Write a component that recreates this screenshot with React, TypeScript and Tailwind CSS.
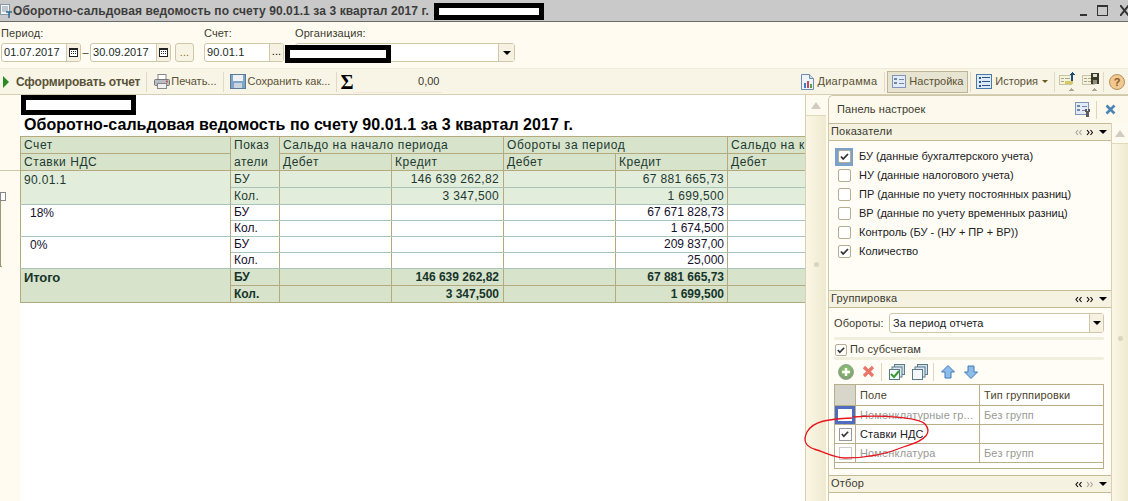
import React from "react";

const font = "font-['Liberation_Sans',Arial,sans-serif]";

function Sep() {
  return <div className="w-px h-[20px] bg-[#e0dac6] shrink-0" />;
}

function CalIcon() {
  return (
    <svg width="9" height="9" viewBox="0 0 9 9" shapeRendering="crispEdges">
      <rect x="0" y="0" width="9" height="9" fill="#222" />
      <rect x="1" y="2" width="7" height="6" fill="#fff" />
      <path d="M2 3h1v1H2zM4 3h1v1H4zM6 3h1v1H6zM2 5h1v1H2zM4 5h1v1H4zM6 5h1v1H6z" fill="#222" />
    </svg>
  );
}

function DateInput({ value, w }: { value: string; w: string }) {
  return (
    <div className={`${w} h-[19px] flex bg-white border border-[#cfc8a8] rounded-[3px] overflow-hidden`}>
      <div className="flex-1 pl-[2px] text-[11px] leading-[17px] text-[#1a2a20] tracking-[0.05px]">{value}</div>
      <div className="w-[14px] flex items-center justify-center bg-[#f6f1e2] border-l border-[#cfc8a8]">
        <CalIcon />
      </div>
    </div>
  );
}

function Tool({ children, className = "" }: { children: React.ReactNode; className?: string }) {
  return <div className={`flex items-center text-[11px] text-[#5a5238] whitespace-nowrap ${className}`}>{children}</div>;
}

function ChartIcon() {
  return (
    <svg width="13" height="16" viewBox="0 0 13 16">
      <path d="M.5 .5h8l4 4v11H.5z" fill="#eef4fa" stroke="#6d8db0" />
      <path d="M8.5 .5v4h4" fill="#cfdcea" stroke="#6d8db0" />
      <rect x="3" y="9" width="2" height="5" fill="#3d7fc0" />
      <rect x="6" y="7" width="2" height="7" fill="#c84a5a" />
      <rect x="9" y="10" width="2" height="4" fill="#5aa04a" />
    </svg>
  );
}

function SetupIcon({ wrench }: { wrench?: boolean }) {
  return (
    <svg width={wrench ? 16 : 14} height={wrench ? 15 : 13} viewBox={wrench ? "0 0 16 15" : "0 0 14 13"} shapeRendering="crispEdges">
      <rect x="0.5" y="0.5" width="13" height="12" fill="#e4ebf6" stroke="#7f95bb" />
      <path d="M2 3h3v2H2zM2 7h3v2H2z" fill="#7088a8" />
      <path d="M7 4h5v1H7zM7 8h5v1H7z" fill="#7088a8" />
      {wrench ? <path d="M10 7h2v2h1V7h2v3h-1v5h-3v-5h-1z" fill="#5c5c5c" /> : null}
    </svg>
  );
}

function HistoryIcon() {
  return (
    <svg width="16" height="15" viewBox="0 0 16 15" shapeRendering="crispEdges">
      <rect x="0.5" y="0.5" width="15" height="14" fill="#dfeaf6" stroke="#4a7ba8" />
      <path d="M3 3h2v2H3zM3 7h2v2H3zM3 11h2v2H3z" fill="#24588c" />
      <path d="M6 3h8v1H6zM6 7h8v1H6zM6 11h8v1H6z" fill="#24588c" />
    </svg>
  );
}

function ListArrow({ disk }: { disk?: boolean }) {
  return (
    <svg width="17" height="20" viewBox="0 0 17 20" shapeRendering="crispEdges">
      <rect x="0.5" y="3.5" width="12" height="9" fill="#f4f2d8" stroke="#c8c4a8" />
      <path d="M2 6h3v1H2zM6 6h5v1H6zM2 9h3v1H2zM6 9h5v1H6z" fill="#a8a890" />
      {disk ? (
        <>
          <rect x="9" y="1" width="8" height="11" fill="#3a3a2a" />
          <rect x="11" y="2" width="4" height="3" fill="#e0e0d0" />
          <rect x="11" y="8" width="4" height="4" fill="#909080" />
        </>
      ) : (
        <>
          <path d="M6 9h8v3H6z" fill="#d8c860" />
          <path d="M13 0l3 3h-2v6h-2V3h-2z" fill="#1f4f78" />
        </>
      )}
      <path d="M9 19l3-3 3 3z" fill="#a8a898" />
    </svg>
  );
}

type Row = { h: string; name?: string; rows?: number; pok: string; k1?: string; k2?: string; tone: "light" | "white" | "total" };

const rows: Row[] = [
  { h: "h-[17px]", name: "90.01.1", rows: 2, pok: "БУ", k1: "146 639 262,82", k2: "67 881 665,73", tone: "light" },
  { h: "h-[17px]", pok: "Кол.", k1: "3 347,500", k2: "1 699,500", tone: "light" },
  { h: "h-[16px]", name: "18%", rows: 2, pok: "БУ", k2: "67 671 828,73", tone: "white" },
  { h: "h-[16px]", pok: "Кол.", k2: "1 674,500", tone: "white" },
  { h: "h-[16px]", name: "0%", rows: 2, pok: "БУ", k2: "209 837,00", tone: "white" },
  { h: "h-[16px]", pok: "Кол.", k2: "25,000", tone: "white" },
  { h: "h-[17px]", name: "Итого", rows: 2, pok: "БУ", k1: "146 639 262,82", k2: "67 881 665,73", tone: "total" },
  { h: "h-[17px]", pok: "Кол.", k1: "3 347,500", k2: "1 699,500", tone: "total" },
];

const th = "border border-[#b5aa7d] bg-[#d8e3cc] pl-[3px] pr-0 text-left font-normal align-top text-[12px] text-[#1c3a30] tracking-[0.55px] overflow-hidden whitespace-nowrap";
const thText = "h-[16px] pt-[1px] leading-[14px]";

function HeadCell({ text, span }: { text: string; span?: number }) {
  return (
    <th className={th} colSpan={span}>
      <div className={thText}>{text}</div>
    </th>
  );
}

function ReportTable() {
  return (
    <table className="table-fixed border-collapse w-[800px]">
      <colgroup>
        <col className="w-[210px]" />
        <col className="w-[49px]" />
        <col className="w-[112px]" />
        <col className="w-[112px]" />
        <col className="w-[112px]" />
        <col className="w-[112px]" />
        <col className="w-[93px]" />
      </colgroup>
      <thead>
        <tr className="h-[17px]">
          <HeadCell text="Счет" />
          <th className={th} rowSpan={2}>
            <div className="h-[33px] leading-[17px] tracking-[0.5px]">Показ<br />атели</div>
          </th>
          <HeadCell text="Сальдо на начало периода" span={2} />
          <HeadCell text="Обороты за период" span={2} />
          <HeadCell text="Сальдо на конец периода" />
        </tr>
        <tr className="h-[17px]">
          <HeadCell text="Ставки НДС" />
          <HeadCell text="Дебет" />
          <HeadCell text="Кредит" />
          <HeadCell text="Дебет" />
          <HeadCell text="Кредит" />
          <HeadCell text="Дебет" />
        </tr>
      </thead>
      <tbody>
        {rows.map((r, i) => {
          const total = r.tone === "total";
          const bg = r.tone === "light" ? "bg-[#e3eddc]" : total ? "bg-[#d8e3cc]" : "bg-white";
          const line = total ? "border-[#b5aa7d]" : "border-[#a8c4b8]";
          const box = r.tone === "white" ? "h-[15px] leading-[14px]" : "h-[16px] pt-[1px] leading-[14px]";
          const cell = `border ${line} border-x-[#b5aa7d] ${bg} pl-[3px] text-[12px] whitespace-nowrap overflow-hidden ${
            total ? "font-bold text-[#16352a]" : r.tone === "light" ? "text-[#1c3a30] tracking-[0.35px]" : "text-[#14102c]"
          }`;
          return (
            <tr key={i} className={r.h}>
              {r.rows ? (
                <td
                  className={`${cell} align-top ${r.tone === "white" ? "pl-[9px] pt-[1px]" : "pt-[2px]"} ${total ? "text-[13px] tracking-[-0.1px]" : ""}`}
                  rowSpan={r.rows}
                >
                  <div className="h-[14px] leading-[14px]">{r.name}</div>
                </td>
              ) : null}
              <td className={cell}><div className={box}>{r.pok}</div></td>
              <td className={cell} />
              <td className={`${cell} text-right pr-[4px]`}><div className={box}>{r.k1}</div></td>
              <td className={cell} />
              <td className={`${cell} text-right pr-[3px]`}><div className={box}>{r.k2}</div></td>
              <td className={cell} />
            </tr>
          );
        })}
      </tbody>
    </table>
  );
}

function Chevrons({ flip, dim }: { flip?: boolean; dim?: boolean }) {
  const d = flip ? "M3 1L1 3.5 3 6M6.5 1l-2 2.5 2 2.5" : "M1 1l2 2.5L1 6M4.5 1l2 2.5-2 2.5";
  return (
    <svg width="7" height="7" viewBox="0 0 7 7">
      <path d={d} fill="none" stroke={dim ? "#a8a8a0" : "#111"} strokeWidth="1.2" />
    </svg>
  );
}

function SectionHead({ title, dim }: { title: string; dim?: "left" | "right" }) {
  return (
    <div className="h-[18px] shrink-0 flex items-center justify-between bg-[#f6f2e2] border-y border-[#c4bb94] pl-[2px] pr-[4px] text-[11px] tracking-[0.2px] text-[#3a3a30]">
      <span className="pb-[2px]">{title}</span>
      <span className="flex items-center gap-[4px]">
        <Chevrons flip dim={dim === "left"} />
        <Chevrons dim={dim === "right"} />
        <span className="ml-[2px] w-0 h-0 border-x-[4px] border-x-transparent border-t-[4px] border-t-black" />
      </span>
    </div>
  );
}

function CheckMark({ size = 11 }: { size?: number }) {
  return (
    <svg width={size} height={size} viewBox="0 0 11 11">
      <path d="M2 5.5l2.2 2.5L9 3" fill="none" stroke="#333" strokeWidth="1.8" />
    </svg>
  );
}

const indicators = [
  { t: "БУ (данные бухгалтерского учета)", on: true, focus: true },
  { t: "НУ (данные налогового учета)" },
  { t: "ПР (данные по учету постоянных разниц)" },
  { t: "ВР (данные по учету временных разниц)" },
  { t: "Контроль (БУ - (НУ + ПР + ВР))" },
  { t: "Количество", on: true },
];

function AddIcon() {
  return (
    <svg width="16" height="16" viewBox="0 0 16 16">
      <defs>
        <radialGradient id="addBall" cx="50%" cy="40%" r="60%">
          <stop offset="0%" stopColor="#8fd070" />
          <stop offset="100%" stopColor="#7a9a70" />
        </radialGradient>
      </defs>
      <circle cx="8" cy="8" r="7.5" fill="url(#addBall)" stroke="#9aa898" />
      <path d="M8 4v8M4 8h8" stroke="#fff" strokeWidth="2.4" />
    </svg>
  );
}

function DeleteIcon() {
  return (
    <svg width="13" height="13" viewBox="0 0 13 13">
      <path d="M2 2l9 9M11 2l-9 9" stroke="#e8776a" strokeWidth="3.2" />
    </svg>
  );
}

function Stack({ check }: { check?: boolean }) {
  return (
    <svg width="16" height="16" viewBox="0 0 16 16">
      <rect x="5.5" y="0.5" width="10" height="10" fill="#cfe0ea" stroke="#5a7a8a" />
      <rect x="3" y="3" width="10" height="10" fill="#dfe8f0" stroke="#5a7a8a" />
      <rect x="0.5" y="5.5" width="10" height="10" fill="#f4f8fa" stroke="#5a7a8a" />
      {check ? <path d="M2 10l3 3 5-6" fill="none" stroke="#3a9a30" strokeWidth="2" /> : null}
    </svg>
  );
}

function Arrow({ down }: { down?: boolean }) {
  return (
    <svg width="14" height="14" viewBox="0 0 14 14">
      <path d={down ? "M4 1h6v6h3.5L7 13.5.5 7H4z" : "M4 13h6V7h3.5L7 .5.5 7H4z"} fill="#8dbce8" stroke="#3c7ab8" />
    </svg>
  );
}

function GroupTable() {
  const rowsG = [
    { f: "Номенклатурные гр...", t: "Без групп", grey: true, focus: true },
    { f: "Ставки НДС", t: "", on: true },
    { f: "Номенклатура", t: "Без групп", grey: true },
  ];
  return (
    <div className="ml-[5px] mt-[2px] w-[270px] h-[85px] border border-[#b9b08a] bg-white flex flex-col text-[11px] tracking-[0.15px]">
      <div className="h-[21px] flex border-b border-[#b9b08a] text-[#4a4428] shrink-0">
        <div className="w-[21px] bg-[#d8d5cb] border-r border-[#b9b08a]" />
        <div className="w-[124px] pl-[4px] border-r border-[#b9b08a] leading-[20px]">Поле</div>
        <div className="flex-1 pl-[4px] leading-[20px]">Тип группировки</div>
      </div>
      {rowsG.map((r) => (
        <div key={r.f} className="h-[19px] flex border-b border-[#b9b08a] shrink-0">
          <div className="w-[21px] border-r border-[#b9b08a] flex items-center justify-center">
            {r.focus ? (
              <div className="w-[20px] h-[18px] shrink-0 bg-white border-[3px] border-[#4f6cc0]" />
            ) : (
              <div className={`w-[13px] h-[13px] flex items-center justify-center border ${r.on ? "border-[#999]" : "border-[#ccc]"}`}>
                {r.on ? <CheckMark size={10} /> : null}
              </div>
            )}
          </div>
          <div className={`w-[124px] pl-[4px] border-r border-[#b9b08a] leading-[18px] whitespace-nowrap overflow-hidden ${r.grey ? "text-[#9a9a94]" : "text-[#20201c]"}`}>{r.f}</div>
          <div className="flex-1 pl-[4px] leading-[18px] text-[#9a9a94]">{r.t}</div>
        </div>
      ))}
    </div>
  );
}

function SettingsPanel() {
  return (
    <div className="w-[300px] h-full ml-[2px] border-l border-t border-[#cfc8a8] rounded-tl-[5px] bg-[#fdf9ec] flex flex-col overflow-hidden">
      <div className="h-[27px] shrink-0 flex items-center pl-[8px] text-[11px] tracking-[0.1px] text-[#3c3c30]">
        <span className="flex-1">Панель настроек</span>
        <SetupIcon wrench />
        <div className="w-px h-[18px] bg-[#ddd6bc] ml-[5px] mr-[8px]" />
        <svg width="11" height="11" viewBox="0 0 11 11" className="mr-[12px]">
          <path d="M1.5 1.5l8 8M9.5 1.5l-8 8" stroke="#4a85b5" strokeWidth="2.6" />
        </svg>
      </div>
      <div className="flex-1 flex min-h-0">
        <div className="w-[282px] flex flex-col">
          <SectionHead title="Показатели" dim="left" />
          <div className="h-[149px] shrink-0 bg-[#fffdf6] pt-[6px] pl-[6px]">
            {indicators.map((c) => (
              <div key={c.t} className="h-[19px] flex items-center text-[11px] text-[#20201c] whitespace-nowrap">
                <div className={`w-[18px] h-[18px] flex items-center justify-center ${c.focus ? "bg-[#7aa0cc]" : ""}`}>
                  <div className="w-[13px] h-[13px] rounded-[2px] bg-white border border-[#b5ad92] flex items-center justify-center">
                    {c.on ? <CheckMark /> : null}
                  </div>
                </div>
                <span className="ml-[6px]">{c.t}</span>
              </div>
            ))}
          </div>
          <SectionHead title="Группировка" />
          <div className="h-[167px] shrink-0 bg-[#fffdf6]">
            <div className="flex items-center mt-[5px] pl-[5px] text-[11px] tracking-[0.1px] text-[#3a3a30]">
              <span className="w-[55px]">Обороты:</span>
              <div className="w-[215px] h-[20px] flex bg-white border border-[#cfc8a8] rounded-[3px]">
                <span className="flex-1 pl-[3px] leading-[18px] text-[#20201c]">За период отчета</span>
                <div className="w-[14px] bg-[#f6f1e2] border-l border-[#cfc8a8] flex items-center justify-center">
                  <span className="w-0 h-0 border-x-[4px] border-x-transparent border-t-[4px] border-t-black" />
                </div>
              </div>
            </div>
            <div className="ml-[5px] mt-[4px] h-[3px] w-[270px] rounded-full bg-[#f0eedc]" />
            <div className="flex items-center h-[13px] mt-[3px] pl-[6px] text-[11px] tracking-[0.1px] text-[#3a3a30]">
              <div className="w-[12px] h-[12px] rounded-[2px] bg-white border border-[#b5ad92] flex items-center justify-center mr-[3px]">
                <CheckMark size={10} />
              </div>
              По субсчетам
            </div>
            <div className="ml-[5px] mt-[1px] h-[3px] w-[270px] rounded-full bg-[#f0eedc]" />
            <div className="h-[21px] flex items-center pl-[9px] mt-[1px]">
              <AddIcon />
              <div className="ml-[8px]"><DeleteIcon /></div>
              <div className="w-px h-[18px] bg-[#ddd6bc] ml-[6px] mr-[7px]" />
              <Stack check />
              <div className="w-[7px]" />
              <Stack />
              <div className="w-px h-[18px] bg-[#ddd6bc] ml-[5px] mr-[7px]" />
              <Arrow />
              <div className="w-[9px]" />
              <Arrow down />
            </div>
            <GroupTable />
          </div>
          <SectionHead title="Отбор" dim="right" />
          <div className="flex-1 bg-[#fffdf6]" />
        </div>
        <Scrollbar className="flex-1" grip="mt-[192px]" />
      </div>
    </div>
  );
}

function Scrollbar({ className, grip }: { className: string; grip: string }) {
  return (
    <div className={`${className} shrink-0 flex flex-col bg-gradient-to-r from-[#fbf7e6] to-[#efe9cf] border-l border-[#d8d0b0]`}>
      <div className="h-[21px] shrink-0 flex items-center justify-center border-b border-[#e0dabc] bg-[#fdfaf0]">
        <span className="w-0 h-0 border-x-[5px] border-x-transparent border-b-[7px] border-b-[#d0ccc0]" />
      </div>
      <div className={`${grip} w-[5px] h-[5px] rounded-full bg-[#d8d4c0] mx-auto`} />
    </div>
  );
}

export default function App() {
  return (
    <div className={`${font} relative w-[1128px] h-[501px] overflow-hidden bg-[#fffbf0] flex flex-col`}>
      {/* title */}
      <div className="h-[22px] shrink-0 bg-[#c9c9c9] border-b border-[#6a6a6a] flex items-center">
        <svg width="13" height="14" viewBox="0 0 13 14" className="shrink-0">
          <rect x="0.5" y="0.5" width="9" height="10" fill="#f4f4f4" stroke="#8898a8" />
          <path d="M2 3h6M2 5h6M2 7h6" stroke="#8898a8" />
          <path d="M6 8h6M9 8v6" stroke="#2a6a98" strokeWidth="1.4" />
        </svg>
        <span className="flex-1 text-[12px] font-bold text-[#3c3c3c] leading-none whitespace-nowrap tracking-[0.1px]">
          Оборотно-сальдовая ведомость по счету 90.01.1 за 3 квартал 2017 г.
        </span>
        <div className="w-[7px] h-[2px] bg-[#333] mt-[9px]" />
        <div className="w-[11px] h-[11px] border border-[#333] border-t-2 ml-[10px]" />
        <svg width="8" height="11" viewBox="0 0 8 11" className="ml-[12px]">
          <path d="M0 0l9 11M9 0L0 11" stroke="#333" strokeWidth="2" />
        </svg>
      </div>

      {/* params */}
      <div className="h-[46px] shrink-0 flex text-[11px] tracking-[0.1px] text-[#3c3c30] pt-[4px]">
        <div className="ml-[1px] w-[203px] shrink-0">
          <div className="h-[17px] leading-[14px]">Период:</div>
          <div className="flex items-center">
            <DateInput value="01.07.2017" w="w-[80px]" />
            <span className="w-[9px] text-center leading-none">–</span>
            <DateInput value="30.09.2017" w="w-[81px]" />
            <div className="ml-[4px] w-[19px] h-[19px] rounded-[3px] border border-[#cfc8a8] bg-[#f8f4e4] text-center leading-[16px] text-[#8a6a30]">...</div>
          </div>
        </div>
        <div className="w-[91px] shrink-0">
          <div className="h-[17px] leading-[14px]">Счет:</div>
          <div className="w-[80px] h-[19px] flex bg-white border border-[#cfc8a8] rounded-[3px]">
            <span className="flex-1 pl-[2px] leading-[17px] text-[#1a2a20]">90.01.1</span>
            <div className="w-[14px] bg-[#f6f1e2] border-l border-[#cfc8a8] text-center leading-[14px] text-black">...</div>
          </div>
        </div>
        <div className="w-[221px] shrink-0">
          <div className="h-[17px] leading-[14px]">Организация:</div>
          <div className="w-[220px] h-[19px] flex bg-white border border-[#cfc8a8] rounded-[3px]">
            <span className="flex-1" />
            <div className="w-[16px] bg-[#f6f1e2] border-l border-[#cfc8a8] flex items-center justify-center">
              <span className="w-0 h-0 border-x-[4px] border-x-transparent border-t-[4px] border-t-black" />
            </div>
          </div>
        </div>
      </div>

      {/* toolbar */}
      <div className="h-[27px] shrink-0 bg-[#f8f4e6] border-t border-[#f0ead6] border-b border-b-[#d6cfb4] flex items-center">
        <span className="ml-[3px] w-0 h-0 border-y-[6px] border-y-transparent border-l-[6px] border-l-[#2a8a2a]" />
        <Tool className="ml-[7px] text-[12px] font-bold tracking-[-0.15px] text-[#4a3c18]">Сформировать отчет</Tool>
        <div className="w-[6px]" />
        <Sep />
        <svg width="16" height="15" viewBox="0 0 16 15" className="ml-[7px]">
          <rect x="4" y="0.5" width="8" height="5" fill="#fff" stroke="#888" />
          <rect x="0.5" y="5.5" width="15" height="6" rx="1" fill="#b8bcc4" stroke="#777" />
          <rect x="3.5" y="9.5" width="9" height="5" fill="#f0f0f0" stroke="#888" />
          <circle cx="13" cy="7.5" r="1" fill="#d04030" />
        </svg>
        <Tool className="ml-[1px]">Печать...</Tool>
        <div className="w-[6px]" />
        <Sep />
        <svg width="16" height="15" viewBox="0 0 16 15" className="ml-[6px]" shapeRendering="crispEdges">
          <rect x="0.5" y="0.5" width="15" height="14" fill="#7ea4c8" stroke="#5a7a98" />
          <rect x="3" y="1" width="10" height="6" fill="#eef2f6" />
          <rect x="4" y="9" width="8" height="5" fill="#c8d4e0" />
        </svg>
        <Tool className="ml-[2px]">Сохранить как...</Tool>
        <div className="w-[6px]" />
        <Sep />
        <span className="ml-[3px] text-[20px] font-bold leading-none text-black font-['Liberation_Serif',serif]">Σ</span>
        <div className="w-[89px] h-[22px] text-right pr-[3px] text-[11px] leading-[21px] text-[#3c3c30] border-b border-[#eee8d4]">0,00</div>
        <div className="flex-1" />
        <ChartIcon />
        <Tool className="ml-[3px] tracking-[0.3px]">Диаграмма</Tool>
        <div className="w-[7px]" />
        <Sep />
        <div className="ml-[2px] w-[81px] h-[22px] bg-[#e8e4d2] border border-[#bdb596] flex items-center pl-[4px] gap-[3px]">
          <SetupIcon />
          <Tool>Настройка</Tool>
        </div>
        <div className="w-[2px]" />
        <Sep />
        <div className="ml-[5px]"><HistoryIcon /></div>
        <Tool className="ml-[3px]">История</Tool>
        <span className="ml-[4px] w-0 h-0 border-x-[3px] border-x-transparent border-t-[3px] border-t-[#6a5a20]" />
        <div className="w-[6px]" />
        <Sep />
        <div className="ml-[4px]"><ListArrow /></div>
        <div className="ml-[6px]"><ListArrow disk /></div>
        <div className="w-[4px]" />
        <Sep />
        <div className="ml-[5px] mr-[3px] w-[16px] h-[16px] rounded-full bg-[#f0c890] border border-[#b8915c] text-center text-[11px] font-bold leading-[14px] text-[#8a5a20]">?</div>
      </div>

      {/* body */}
      <div className="flex-1 flex min-h-0">
        <div className="w-[20px] shrink-0 relative">
          <div className="absolute left-0 top-[75px] w-[20px] h-px bg-[#cfc8a8]" />
          <div className="absolute left-0 top-[97px] w-[6px] h-[9px] border border-[#888] bg-white" />
          <div className="absolute left-0 top-[106px] w-[2px] h-[66px] border-l border-b border-[#a09870]" />
        </div>
        <div className="w-[785px] shrink-0 bg-white overflow-hidden flex flex-col">
          <div className="h-[22px] shrink-0" />
          <div className="h-[19px] shrink-0 pl-[4px] text-[16px] font-bold leading-[15px] tracking-[0.05px] text-black whitespace-nowrap">
            Оборотно-сальдовая ведомость по счету 90.01.1 за 3 квартал 2017 г.
          </div>
          <ReportTable />
        </div>
        <Scrollbar className="w-[21px]" grip="mt-[146px]" />
        <SettingsPanel />
      </div>

      {/* redaction bars lying over the page */}
      <div className="absolute left-[434px] top-[3px] w-[110px] h-[17px] bg-white border-[5px] border-black" />
      <div className="absolute left-[285px] top-[45px] w-[106px] h-[18px] bg-white border-[5px] border-black" />
      <div className="absolute left-[21px] top-[95px] w-[115px] h-[20px] bg-white border-[5px] border-black" />

      {/* hand-drawn red mark */}
      <svg className="absolute inset-0 pointer-events-none" width="1128" height="501" viewBox="0 0 1128 501">
        <path
          d="M853 417C880 415 918 417 925 424C932 432 927 440 906 446C885 455 862 458 845 458C833 458 825 452 814 449C805 446 803 440 807 432C813 421 828 419 852 418"
          fill="none"
          stroke="#e8141c"
          strokeWidth="1.3"
        />
      </svg>
    </div>
  );
}
